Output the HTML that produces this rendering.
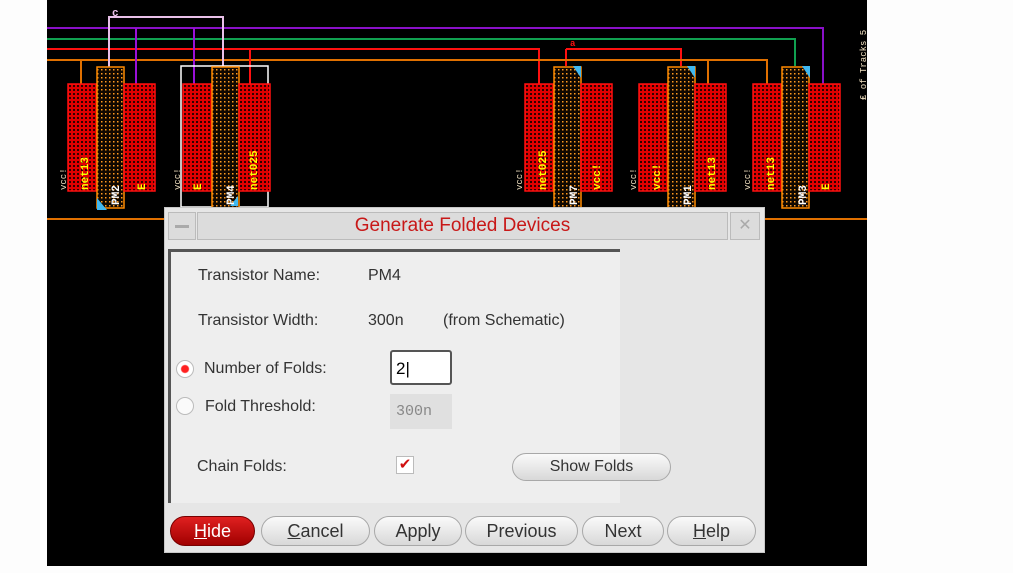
<!DOCTYPE html>
<html><head><meta charset="utf-8"><style>
body{margin:0;width:1013px;height:573px;background:#fdfdfd;position:relative;overflow:hidden;font-family:"Liberation Sans",sans-serif}
#cv{position:absolute;left:47px;top:0;width:820px;height:566px;background:#000}
.dlg{position:absolute;left:164px;top:207px;width:601px;height:346px;background:#e6e6e6;border:1px solid #c8c8c8;box-sizing:border-box}
.t{position:absolute;font-size:16px;color:#333;white-space:nowrap}
.btn{position:absolute;top:516px;height:30px;border:1px solid #a8a8a8;border-radius:15px;background:linear-gradient(#fafafa,#d8d8d8);box-sizing:border-box;font-size:18px;color:#333;text-align:center;line-height:28px}
</style></head><body>
<div id="cv"></div>
<svg style="position:absolute;left:0;top:0" width="1013" height="573">
<defs>
<pattern id="pr" width="4" height="4" patternUnits="userSpaceOnUse"><rect width="4" height="4" fill="#e00000"/><rect x="1" y="1" width="2" height="2" fill="#300000"/></pattern>
<pattern id="po" width="4" height="4" patternUnits="userSpaceOnUse"><rect width="4" height="4" fill="#100800"/><rect x="1" y="1" width="1.5" height="1.5" fill="#ff9a20"/></pattern>
</defs>
<g stroke-width="2" fill="none">
<path d="M47 28H823V84" stroke="#8a10c8"/>
<path d="M47 39H795V66" stroke="#10a050"/>
<path d="M47 49H539V84M566 49H681V66M566 49V66" stroke="#ff1010"/>
<path d="M47 60H767V84M708 60V84M81 60V84" stroke="#e07000"/>
<path d="M109 67V17H223V67" stroke="#e8c0e8"/>
<path d="M136 28V84M194 28V84" stroke="#9a10d8"/>
<path d="M250 49V84" stroke="#ff1010"/>
<path d="M47 219H867" stroke="#e07000"/>
</g>
<rect x="181" y="66" width="87" height="141" fill="none" stroke="#fff" stroke-width="1.5"/>
<g stroke-width="1.5">
<g id="d"><rect x="68" y="84" width="29" height="107" fill="url(#pr)" stroke="#ff1010"/><rect x="97" y="67" width="27" height="141" fill="url(#po)" stroke="#ff8a00"/><rect x="124" y="84" width="31" height="107" fill="url(#pr)" stroke="#ff1010"/></g>
<use href="#d" x="115"/><use href="#d" x="457"/><use href="#d" x="571"/><use href="#d" x="685"/>
</g>
<g fill="#40b8f0"><path d="M97 198v12h10z"/><path d="M238 196v10h-8z"/><path d="M581 66h-8l8 12z"/><path d="M695 66h-8l8 12z"/><path d="M810 66h-8l8 12z"/></g>
<g font-family="Liberation Mono,monospace" font-size="11" font-weight="bold">
<text x="0" y="0" fill="#ff0" transform="translate(88,190) rotate(-90)">net13</text>
<text x="0" y="0" fill="#fff" transform="translate(119,205) rotate(-90)">PM2</text>
<text x="0" y="0" fill="#ff0" transform="translate(145,190) rotate(-90)">E</text>
<text x="0" y="0" fill="#ff0" transform="translate(201,190) rotate(-90)">E</text>
<text x="0" y="0" fill="#fff" transform="translate(234,205) rotate(-90)">PM4</text>
<text x="0" y="0" fill="#ff0" transform="translate(257,190) rotate(-90)">net025</text>
<text x="0" y="0" fill="#ff0" transform="translate(546,190) rotate(-90)">net025</text>
<text x="0" y="0" fill="#fff" transform="translate(577,205) rotate(-90)">PM7</text>
<text x="0" y="0" fill="#ff0" transform="translate(600,190) rotate(-90)">vcc!</text>
<text x="0" y="0" fill="#ff0" transform="translate(660,190) rotate(-90)">vcc!</text>
<text x="0" y="0" fill="#fff" transform="translate(691,205) rotate(-90)">PM1</text>
<text x="0" y="0" fill="#ff0" transform="translate(715,190) rotate(-90)">net13</text>
<text x="0" y="0" fill="#ff0" transform="translate(774,190) rotate(-90)">net13</text>
<text x="0" y="0" fill="#fff" transform="translate(806,205) rotate(-90)">PM3</text>
<text x="0" y="0" fill="#ff0" transform="translate(829,190) rotate(-90)">E</text>
<text x="112" y="16" fill="#e8c0e8">c</text>
<text x="570" y="46" fill="#ff1010" font-size="9">a</text>
</g>
<g font-family="Liberation Mono,monospace" font-size="9" fill="#f0e0c0">
<text transform="translate(66,190) rotate(-90)">vcc!</text><text transform="translate(180,190) rotate(-90)">vcc!</text>
<text transform="translate(522,190) rotate(-90)">vcc!</text><text transform="translate(636,190) rotate(-90)">vcc!</text><text transform="translate(750,190) rotate(-90)">vcc!</text>
<text transform="translate(866,100) rotate(-90)">₤ of Tracks 5</text>
</g>
</svg>
<div class="dlg"></div>
<div style="position:absolute;left:168px;top:212px;width:28px;height:28px;background:#dcdcdc;border:1px solid #bbb;box-sizing:border-box"><div style="margin:12px 6px;height:3px;background:#aaa"></div></div>
<div style="position:absolute;left:197px;top:212px;width:531px;height:28px;background:#dcdcdc;border:1px solid #bbb;box-sizing:border-box;color:#c81818;font-size:19px;text-align:center;line-height:26px">Generate Folded Devices</div>
<div style="position:absolute;left:730px;top:212px;width:30px;height:28px;background:#dcdcdc;border:1px solid #bbb;box-sizing:border-box;color:#aaa;text-align:center;line-height:26px">✕</div>
<div style="position:absolute;left:168px;top:249px;width:452px;height:254px;background:#eeeeee;border-top:3px solid #555;border-left:3px solid #555;box-sizing:border-box"></div>
<div class="t" style="left:198px;top:267px">Transistor Name:</div>
<div class="t" style="left:368px;top:267px">PM4</div>
<div class="t" style="left:198px;top:312px">Transistor Width:</div>
<div class="t" style="left:368px;top:312px">300n</div>
<div class="t" style="left:443px;top:312px">(from Schematic)</div>
<div style="position:absolute;left:176px;top:360px;width:16px;height:16px;border-radius:50%;background:radial-gradient(#ff2020 30%,#fff 40%);border:1px solid #bbb"></div>
<div class="t" style="left:204px;top:360px">Number of Folds:</div>
<div style="position:absolute;left:390px;top:350px;width:62px;height:35px;background:#fff;border:2px solid #555;border-radius:3px;box-sizing:border-box;font-size:17px;padding:7px 0 0 4px">2|</div>
<div style="position:absolute;left:176px;top:397px;width:16px;height:16px;border-radius:50%;background:#fafafa;border:1px solid #bbb"></div>
<div class="t" style="left:205px;top:398px">Fold Threshold:</div>
<div style="position:absolute;left:390px;top:394px;width:62px;height:35px;background:#e0e0e0;box-sizing:border-box;font-family:'Liberation Mono',monospace;font-size:15px;color:#888;padding:9px 0 0 6px">300n</div>
<div class="t" style="left:197px;top:458px">Chain Folds:</div>
<div style="position:absolute;left:396px;top:456px;width:16px;height:16px;background:#fff;border:1px solid #bbb;color:#d01010;font-size:15px;line-height:16px;text-align:center">✔</div>
<div class="btn" style="left:512px;top:453px;width:159px;height:28px;font-size:16px;line-height:26px">Show Folds</div>
<div class="btn" style="left:170px;width:85px;background:linear-gradient(#e02020,#a00000);border-color:#700;color:#fff"><u>H</u>ide</div>
<div class="btn" style="left:261px;width:109px"><u>C</u>ancel</div>
<div class="btn" style="left:374px;width:88px">Apply</div>
<div class="btn" style="left:465px;width:113px">Previous</div>
<div class="btn" style="left:582px;width:82px">Next</div>
<div class="btn" style="left:667px;width:89px"><u>H</u>elp</div>
</body></html>
